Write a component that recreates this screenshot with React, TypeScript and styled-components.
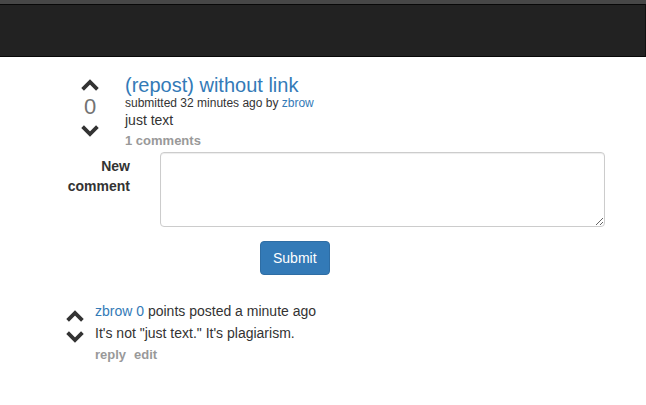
import React from "react";
import styled, { createGlobalStyle } from "styled-components";

const Global = createGlobalStyle`
  html, body { margin: 0; padding: 0; background: #fff; }
  body { font-family: "Liberation Sans", Arial, sans-serif; font-size: 14px; line-height: 1.42857; color: #333; }
  * { box-sizing: border-box; }
`;

const TopStrip = styled.div`
  height: 4px;
  background: #474747;
`;

const Navbar = styled.div`
  height: 53px;
  background: #222;
  border-top: 1px solid #080808;
  border-bottom: 1px solid #080808;
  border-right: 1px solid #111;
`;

const Page = styled.div`
  padding: 17px 0 0 0;
`;

const PostRow = styled.div`
  display: flex;
  align-items: flex-start;
  padding-left: 75px;
  gap: 20px;
`;

const VoteCol = styled.div`
  width: 30px;
  display: flex;
  flex-direction: column;
  align-items: center;
  padding-top: 5px;
`;

const Score = styled.div`
  font-size: 22px;
  line-height: 22px;
  color: #737373;
  margin: 5px 0 7px;
`;

const Chevron = styled.svg`
  display: block;
  width: 18px;
  height: 12px;
`;

const PostBody = styled.div`
  display: flex;
  flex-direction: column;
`;

const Title = styled.a`
  font-size: 20px;
  line-height: 22px;
  color: #337ab7;
  text-decoration: none;
`;

const Meta = styled.div`
  font-size: 12px;
  line-height: 14px;
`;

const Link = styled.a`
  color: #337ab7;
  text-decoration: none;
`;

const BodyText = styled.div`
  font-size: 14px;
  line-height: 20px;
`;

const MutedLink = styled.a`
  font-size: 13px;
  font-weight: bold;
  color: #999;
  text-decoration: none;
  line-height: 18px;
  margin-top: 2px;
`;

const FormRow = styled.div`
  display: flex;
  align-items: flex-start;
  margin-top: 2px;
`;

const Label = styled.label`
  width: 130px;
  padding-top: 4px;
  text-align: right;
  font-weight: bold;
  font-size: 14px;
  line-height: 20px;
  padding-left: 60px;
`;

const TextArea = styled.textarea`
  margin-left: 30px;
  width: 445px;
  height: 75px;
  border: 1px solid #ccc;
  border-radius: 4px;
  box-shadow: inset 0 1px 1px rgba(0,0,0,.075);
  font-family: inherit;
  padding: 6px 12px;
`;

const SubmitRow = styled.div`
  padding-left: 260px;
  margin-top: 14px;
`;

const Button = styled.button`
  height: 34px;
  padding: 6px 12px;
  font-family: inherit;
  font-size: 14px;
  color: #fff;
  background: #337ab7;
  border: 1px solid #2e6da4;
  border-radius: 4px;
`;

const CommentRow = styled.div`
  display: flex;
  align-items: flex-start;
  padding-left: 66px;
  gap: 11px;
  margin-top: 26px;
`;

const CommentVotes = styled.div`
  display: flex;
  flex-direction: column;
  gap: 9px;
  padding-top: 9px;
`;

const CommentBody = styled.div`
  display: flex;
  flex-direction: column;
`;

const CommentLine = styled.div`
  font-size: 14px;
  line-height: 20px;
  margin-bottom: 2px;
`;

const Actions = styled.div`
  display: flex;
  gap: 8px;
  margin-top: 2px;
`;

const Action = styled.a`
  font-size: 13px;
  font-weight: bold;
  color: #999;
  line-height: 16px;
`;

const Up = () => (
  <Chevron viewBox="0 0 18 12">
    <path d="M1.6 10.4 L9 3 L16.4 10.4" fill="none" stroke="#333" strokeWidth="3.8" />
  </Chevron>
);
const Down = () => (
  <Chevron viewBox="0 0 18 12">
    <path d="M1.6 1.6 L9 9 L16.4 1.6" fill="none" stroke="#333" strokeWidth="3.8" />
  </Chevron>
);

export default function App() {
  return (
    <>
      <Global />
      <TopStrip />
      <Navbar />
      <Page>
        <PostRow>
          <VoteCol>
            <Up />
            <Score>0</Score>
            <Down />
          </VoteCol>
          <PostBody>
            <Title href="#">(repost) without link</Title>
            <Meta>
              submitted 32 minutes ago by <Link href="#">zbrow</Link>
            </Meta>
            <BodyText>just text</BodyText>
            <MutedLink href="#">1 comments</MutedLink>
          </PostBody>
        </PostRow>
        <FormRow>
          <Label>New comment</Label>
          <TextArea />
        </FormRow>
        <SubmitRow>
          <Button>Submit</Button>
        </SubmitRow>
        <CommentRow>
          <CommentVotes>
            <Up />
            <Down />
          </CommentVotes>
          <CommentBody>
            <CommentLine>
              <Link href="#">zbrow</Link> <Link href="#">0</Link> points posted a minute ago
            </CommentLine>
            <CommentLine>It's not "just text." It's plagiarism.</CommentLine>
            <Actions>
              <Action>reply</Action>
              <Action>edit</Action>
            </Actions>
          </CommentBody>
        </CommentRow>
      </Page>
    </>
  );
}
